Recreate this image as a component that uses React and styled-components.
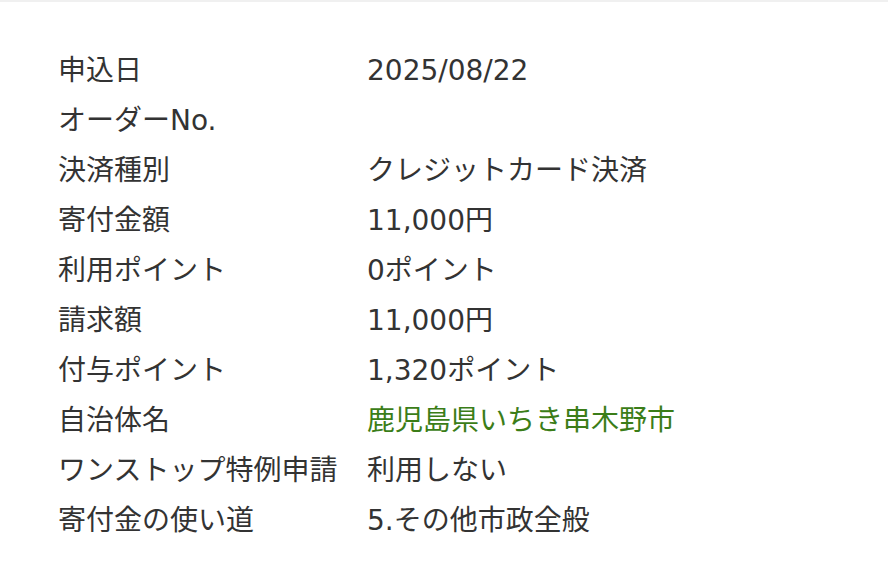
import styled, { createGlobalStyle } from "styled-components";

const GlobalStyle = createGlobalStyle`
  body {
    margin: 0;
    background: #fff;
    font-family: "DejaVu Sans", "Noto Sans CJK JP", sans-serif;
    color: #333;
  }
`;

const rows = [
  { label: "申込日", value: "2025/08/22" },
  { label: "オーダーNo.", value: "" },
  { label: "決済種別", value: "クレジットカード決済" },
  { label: "寄付金額", value: "11,000円" },
  { label: "利用ポイント", value: "0ポイント" },
  { label: "請求額", value: "11,000円" },
  { label: "付与ポイント", value: "1,320ポイント" },
  { label: "自治体名", value: "鹿児島県いちき串木野市", link: true },
  { label: "ワンストップ特例申請", value: "利用しない" },
  { label: "寄付金の使い道", value: "5.その他市政全般" },
];

const App = () => {
  return (
    <>
      <GlobalStyle />
      <Panel>
        <DetailList>
          {rows.map((row) => (
            <Row key={row.label}>
              <Label>{row.label}</Label>
              <Value $link={row.link}>{row.value}</Value>
            </Row>
          ))}
        </DetailList>
      </Panel>
    </>
  );
};

const Panel = styled.div`
  border-top: 2px solid #f0f0f0;
  padding: 44px 58px 0;
  height: 584px;
  box-sizing: border-box;
`;

const DetailList = styled.dl`
  margin: 0;
  display: grid;
  grid-template-columns: 309px 1fr;
`;

const Row = styled.div`
  display: contents;
`;

const Label = styled.dt`
  height: 50px;
  line-height: 50px;
  font-size: 28px;
  white-space: nowrap;
`;

const Value = styled.dd`
  margin: 0;
  height: 50px;
  line-height: 50px;
  font-size: 28px;
  white-space: nowrap;
  color: ${(p) => (p.$link ? "#3b7d18" : "#333")};
`;

export default App;
